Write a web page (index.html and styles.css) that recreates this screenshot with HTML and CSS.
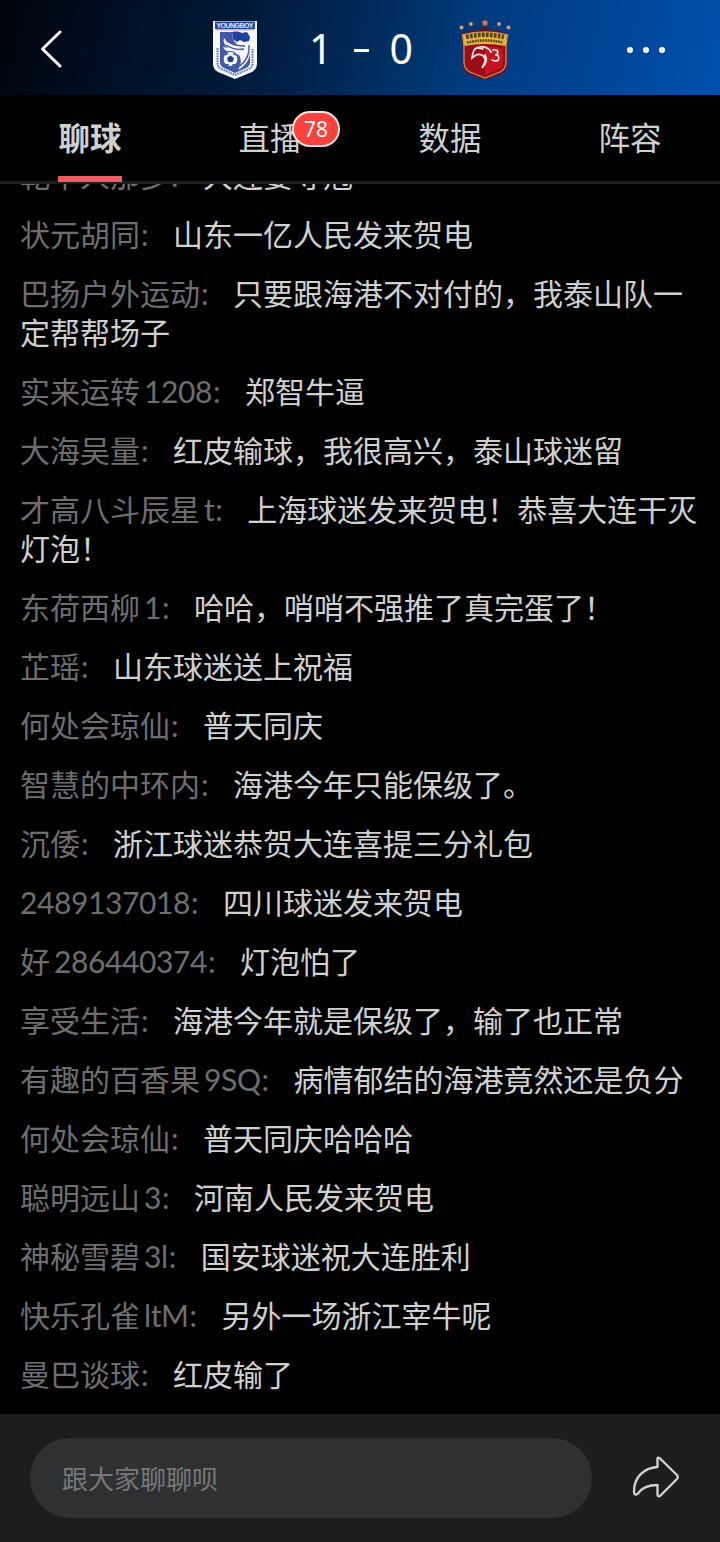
FILE: index.html
```html
<!DOCTYPE html>
<html lang="zh-CN">
<head>
  <meta charset="UTF-8">
  <meta name="viewport" content="width=device-width, initial-scale=1.0">
  <title>聊球</title>
  <link rel="stylesheet" href="styles.css">
</head>
<body>
  <div class="app">
    <header class="match-bar">
      <svg class="back" viewBox="0 0 24 40" fill="none" stroke="#fff" stroke-width="3" stroke-linecap="round" stroke-linejoin="round">
        <path d="M20 3 2.500 20 20 37"/>
      </svg>
      <div class="score-board">
        <svg class="crest home" viewBox="0 0 46 60">
          <path d="M1 1h44v43q0 5-5 8L23 59 6 52q-5-3-5-8z" fill="#f4f6fc"/>
          <path d="M3 1.500h40V9H3z" fill="#29479b"/>
          <path d="M4 9.800h38" stroke="#d77d9b" stroke-width="1"/>
          <text x="23" y="7.800" text-anchor="middle" textLength="37">YOUNGBOY</text>
          <path d="M8 12h30v30q0 4-4 6l-11 5-11-5q-4-2-4-6z" fill="#4259a8"/>
          <path d="M20 12h18v19c0 9-5 15-12 19 3-5 4-10 1-15l-7-3c-4 0-8-2-9-5l5 1c-4-3-5-7-4-10 3 4 9 6 13 6-4-3-5-8-5-12z" fill="#f4f6fc"/>
          <path d="M20 12c5-1 8 0 10 1l5-1 3 5-1 4-5 1-4-2-3 2-4-3z" fill="#203f9c"/>
          <path d="M14 20c5 5 11 6 19 6M14 25c6 4 12 5 18 4M37 25c1 9-3 16-9 21" fill="none" stroke="#3650a4" stroke-width="1.300"/>
          <circle cx="18.500" cy="39" r="7.500" fill="#f4f6fc" stroke="#3650a4"/>
          <path d="m18.500 35.500 3.500 2.500-1.300 4h-4.400L15 38zM12.500 36l2-3 2 1zM24.500 36l-2-3-2 1zM13.500 44l3 2v-2zM23.500 44l-3 2v-2z" fill="#263f91"/>
          <path d="M5.500 28v16q0 3 4 5l13.500 6 13.500-6q4-2 4-5V28" fill="none" stroke="#5a6db0" stroke-width="2" stroke-dasharray="1.500 1"/>
        </svg>
        <div class="score"><span>1</span><i></i><span>0</span></div>
        <svg class="crest away" viewBox="0 0 52 60">
          <path d="m3 12 6 1 3-4 6 2 8-5 8 5 6-2 3 4 6-1-1 16v17q0 7-7 10l-15 5-15-5q-7-3-7-10V28z" fill="#5d1a25"/>
          <g fill="#d9b18c" stroke="#674f52" stroke-width=".8">
            <circle cx="2.500" cy="7.500" r="2"/>
            <circle cx="12" cy="4" r="2"/>
            <circle cx="26" cy="3" r="2.800" fill="#d67852"/>
            <circle cx="40" cy="4" r="2"/>
            <circle cx="49.500" cy="7.500" r="2"/>
          </g>
          <path d="M3.500 15q22.500-6 45 0l-1.500 11v16q0 7-6 10l-15 6-15-6q-6-3-6-10V26z" fill="#9c0d17" stroke="#cf8d4f" stroke-width="1.300"/>
          <path d="M4 15q22-6 44 0l-1.500 11q-20.500-4-41 0z" fill="#e0b43f"/>
          <path d="M7 17q19-4.500 38 0" fill="none" stroke="#59431b" stroke-width="4.500" stroke-dasharray="2.800 1.200"/>
          <path d="M8 22.500q18-4 36 0" fill="none" stroke="#59431b" stroke-width="2.500" stroke-dasharray="1.800 .8"/>
          <path d="M8 29q18-5 36 0v13q0 6-6 8l-12 5V26z" fill="#d91824" opacity=".65"/>
          <path d="M14 33c1-7 14-9 18-1M14 33l-1 5 4-3c6-2 10 2 9 7l-3 6c4-4 6-8 3-13M34 30c6-1 6 4 2 5 5-1 5 6 0 6l-3-1M19 28l5 1" fill="none" stroke="#ffe5e4" stroke-width="1.700" stroke-linecap="round"/>
        </svg>
      </div>
      <div class="more"><i></i><i></i><i></i></div>
    </header>

    <nav class="tabs">
      <a class="tab active">聊球</a>
      <a class="tab">直播<b class="badge">78</b></a>
      <a class="tab">数据</a>
      <a class="tab">阵容</a>
    </nav>

    <main class="chat">
      <p><span class="name">乾中人那多<i>:</i></span>大连要夺冠</p>
      <p><span class="name">状元胡同<i>:</i></span>山东一亿人民发来贺电</p>
      <p><span class="name">巴扬户外运动<i>:</i></span>只要跟海港不对付的，我泰山队一定帮帮场子</p>
      <p><span class="name">实来运转<em>1208</em><i>:</i></span>郑智牛逼</p>
      <p><span class="name">大海吴量<i>:</i></span>红皮输球，我很高兴，泰山球迷留</p>
      <p><span class="name">才高八斗辰星<em>t</em><i>:</i></span>上海球迷发来贺电！恭喜大连干灭灯泡！</p>
      <p><span class="name">东荷西柳<em>1</em><i>:</i></span>哈哈，哨哨不强推了真完蛋了！</p>
      <p><span class="name">芷瑶<i>:</i></span>山东球迷送上祝福</p>
      <p><span class="name">何处会琼仙<i>:</i></span>普天同庆</p>
      <p><span class="name">智慧的中环内<i>:</i></span>海港今年只能保级了。</p>
      <p><span class="name">沉倭<i>:</i></span>浙江球迷恭贺大连喜提三分礼包</p>
      <p><span class="name"><em class="first">2489137018</em><i>:</i></span>四川球迷发来贺电</p>
      <p><span class="name">好<em>286440374</em><i>:</i></span>灯泡怕了</p>
      <p><span class="name">享受生活<i>:</i></span>海港今年就是保级了，输了也正常</p>
      <p><span class="name">有趣的百香果<em>9SQ</em><i>:</i></span>病情郁结的海港竟然还是负分</p>
      <p><span class="name">何处会琼仙<i>:</i></span>普天同庆哈哈哈</p>
      <p><span class="name">聪明远山<em>3</em><i>:</i></span>河南人民发来贺电</p>
      <p><span class="name">神秘雪碧<em>3l</em><i>:</i></span>国安球迷祝大连胜利</p>
      <p><span class="name">快乐孔雀<em>ltM</em><i>:</i></span>另外一场浙江宰牛呢</p>
      <p><span class="name">曼巴谈球<i>:</i></span>红皮输了</p>
    </main>

    <footer class="composer">
      <div class="input">跟大家聊聊呗</div>
      <svg class="share" viewBox="0 0 48 42" fill="none" stroke="#cfcfd0" stroke-width="2.400" stroke-linejoin="round">
        <path d="M25.500 2.500q0-1.500 2-.5l17.500 17q1.500 2 0 4l-17 17q-2 1-2.500-1V29C14 29 9 33 6 37.500q-4 3-4-2C2 21 12 12 25.500 11z"/>
      </svg>
    </footer>
  </div>
</body>
</html>
```

FILE: styles.css
```css
* {
  margin: 0;
  padding: 0;
  box-sizing: border-box;
}

body {
  background: #000;
  color: #d0d0d1;
  font-family: "Noto Sans CJK SC", sans-serif;
  text-autospace: no-autospace;
}

i,
em {
  font-style: normal;
}

.app {
  display: flex;
  flex-direction: column;
  width: 720px;
  height: 1542px;
  overflow: hidden;
}

/* header */
.match-bar {
  display: flex;
  align-items: center;
  flex: none;
  height: 95px;
  padding: 0 55px 0 40px;
  background: linear-gradient(105deg, #00040a 0%, #000d20 14%, #001a3a 34%, #002a5a 50%, #003c80 66%, #004597 82%, #0050ae 100%);
}

.back {
  width: 24px;
  height: 40px;
  margin-top: 3px;
}

.score-board {
  display: flex;
  align-items: center;
  margin-left: 148px;
}

.crest {
  height: 60px;
  margin-top: 4px;
}

.home {
  width: 46px;
}

.home text {
  fill: #dfe6fa;
  font: bold 7px "Liberation Sans", sans-serif;
}

.away {
  width: 52px;
}

.score {
  display: flex;
  align-items: center;
  justify-content: space-between;
  width: 104px;
  margin: 0 46px 0 51px;
  color: #fff;
  font: 41px/50px "Noto Sans", sans-serif;
}

.score i {
  width: 15px;
  height: 3px;
  margin-top: 6px;
  background: #fff;
}

.more {
  display: flex;
  gap: 10px;
  margin: 4px 0 0 auto;
}

.more i {
  width: 6px;
  height: 6px;
  border-radius: 50%;
  background: #fff;
}

/* tabs */
.tabs {
  display: flex;
  flex: none;
  height: 89px;
  border-bottom: 3px solid #1e1e1f;
}

.tab {
  position: relative;
  flex: 1;
  text-align: center;
  font-size: 31.500px;
  line-height: 82px;
}

.active {
  font-weight: bold;
}

.active::after {
  content: "";
  position: absolute;
  left: 58px;
  bottom: -1px;
  width: 64px;
  height: 6px;
  background: #ed5d62;
}

.badge {
  position: absolute;
  top: 16px;
  left: 112px;
  width: 48px;
  height: 36px;
  border: 2px solid #fbe3e0;
  border-radius: 18px;
  background: #fb413c;
  color: #fff;
  font: 21px/32px "Noto Sans", sans-serif;
}

/* messages, newest at the bottom */
.chat {
  display: flex;
  flex: 1;
  flex-direction: column;
  justify-content: flex-end;
  min-height: 0;
  padding: 0 18px 1px 20px;
  overflow: hidden;
  font-size: 30px;
  line-height: 39px;
}

.chat p {
  flex: none;
  margin-bottom: 20px;
}

.name {
  color: #6e6e71;
}

.name em,
.name i {
  font-family: Lato, sans-serif;
  line-height: 0;
}

.name em {
  margin-left: 4px;
  letter-spacing: -.4px;
}

.name .first {
  margin-left: 0;
}

.name i {
  display: inline-block;
  width: 33px;
  padding-left: 1px;
}

/* bottom bar */
.composer {
  display: flex;
  align-items: center;
  flex: none;
  height: 128px;
  padding: 0 40px 0 30px;
  background: #1c1d1f;
}

.input {
  width: 562px;
  height: 80px;
  padding-left: 32px;
  border-radius: 40px;
  background: #2f3032;
  color: #77787b;
  font-size: 26px;
  line-height: 80px;
}

.share {
  width: 48px;
  height: 42px;
  margin: 0 0 2px auto;
}
```
